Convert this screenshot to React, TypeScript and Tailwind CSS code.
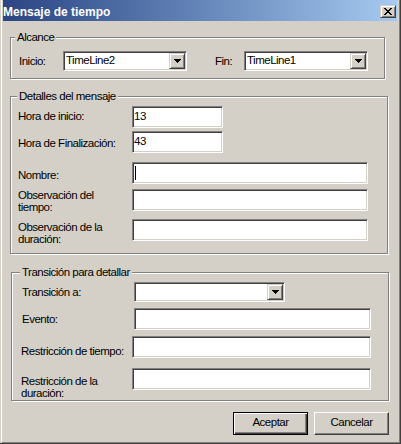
import type { ReactNode } from "react";

const sunken =
  "border border-t-[#808080] border-l-[#808080] border-r-white border-b-white shadow-[inset_1px_1px_0_#404040,inset_-1px_-1px_0_#d4d0c8] bg-white";
const raised =
  "border border-t-[#d4d0c8] border-l-[#d4d0c8] border-r-[#404040] border-b-[#404040] shadow-[inset_1px_1px_0_#fff,inset_-1px_-1px_0_#808080] bg-[#d4d0c8]";

function Arrow() {
  return (
    <svg width="7" height="4" viewBox="0 0 7 4" shapeRendering="crispEdges">
      <rect x="0" y="0" width="7" height="1" fill="#000" />
      <rect x="1" y="1" width="5" height="1" fill="#000" />
      <rect x="2" y="2" width="3" height="1" fill="#000" />
      <rect x="3" y="3" width="1" height="1" fill="#000" />
    </svg>
  );
}

function CloseX() {
  const px = [
    [0, 0], [1, 0], [6, 0], [7, 0],
    [1, 1], [2, 1], [5, 1], [6, 1],
    [2, 2], [3, 2], [4, 2], [5, 2],
    [3, 3], [4, 3],
    [2, 4], [3, 4], [4, 4], [5, 4],
    [1, 5], [2, 5], [5, 5], [6, 5],
    [0, 6], [1, 6], [6, 6], [7, 6],
  ];
  return (
    <svg width="8" height="7" viewBox="0 0 8 7" shapeRendering="crispEdges">
      {px.map(([x, y]) => (
        <rect key={`${x}-${y}`} x={x} y={y} width="1" height="1" fill="#000" />
      ))}
    </svg>
  );
}

function Select({ className, value }: { className: string; value?: string }) {
  return (
    <div className={`${sunken} ${className} flex h-[20px] p-[1px]`}>
      <span className="flex-1 pl-[1px] pt-[1px]">{value}</span>
      <div className={`${raised} flex h-[16px] w-[16px] items-center justify-center`}>
        <Arrow />
      </div>
    </div>
  );
}

function Field({ className, children }: { className: string; children?: ReactNode }) {
  return <div className={`${sunken} ${className} h-[22px] pl-[1px] pt-[3px]`}>{children}</div>;
}

function Group({
  title,
  titleClass,
  className,
  children,
}: {
  title: string;
  titleClass: string;
  className: string;
  children: ReactNode;
}) {
  return (
    <div className={`relative border border-[#808080] shadow-[1px_1px_0_#fff,inset_1px_1px_0_#fff] ${className}`}>
      <span className={`absolute top-[-7px] bg-[#d4d0c8] px-[2px] ${titleClass}`}>{title}</span>
      {children}
    </div>
  );
}

export default function App() {
  return (
    <div className="h-[444px] w-[401px] border-b border-r border-[#404040] bg-[#d4d0c8] pl-[1px] font-['Liberation_Sans',Arial,sans-serif] text-[11.5px] leading-[12px] tracking-[-0.5px] text-black">
      <div className="flex h-full flex-col border-b border-l border-r border-b-[#808080] border-l-white border-r-[#808080] pb-[1px] pl-[1px] pr-[2px]">
        {/* caption */}
        <div className="flex h-[21px] shrink-0 items-start bg-linear-to-r from-[#2b4583] to-[#a6caf0]">
          <span className="pt-[6px] text-[12px] font-bold leading-[12px] tracking-normal text-white">
            Mensaje de tiempo
          </span>
          <div className={`${raised} ml-auto mr-[1px] mt-[5px] flex h-[13px] w-[16px] items-center justify-center`}>
            <CloseX />
          </div>
        </div>

        <Group title="Alcance" titleClass="left-[4px]" className="ml-[7px] mt-[16px] h-[42px] w-[375px] pl-[8px] pt-[13px]">
          <div className="flex items-start">
            <span className="mt-[4px] w-[44px]">Inicio:</span>
            <Select className="w-[124px]" value="TimeLine2" />
            <span className="ml-[28px] mt-[4px] w-[29px]">Fin:</span>
            <Select className="w-[124px]" value="TimeLine1" />
          </div>
        </Group>

        <Group
          title="Detalles del mensaje"
          titleClass="left-[6px]"
          className="ml-[7px] mt-[17px] h-[158px] w-[378px] pl-[7px] pt-[9px]"
        >
          <div className="flex h-[22px] items-start">
            <span className="mt-[4px] w-[114px]">Hora de inicio:</span>
            <Field className="w-[91px]">13</Field>
          </div>
          <div className="mt-[3px] flex h-[22px] items-start">
            <span className="mt-[6px] w-[114px]">Hora de Finalización:</span>
            <Field className="w-[91px]">43</Field>
          </div>
          <div className="mt-[9px] flex h-[22px] items-start">
            <span className="mt-[7px] w-[114px]">Nombre:</span>
            <Field className="w-[236px]">
              <div className="ml-[1px] mt-[0px] h-[14px] w-[1px] bg-black" />
            </Field>
          </div>
          <div className="mt-[5px] flex h-[22px] items-start">
            <span className="w-[114px]">
              Observación del
              <br />
              tiempo:
            </span>
            <Field className="w-[236px]" />
          </div>
          <div className="mt-[8px] flex h-[22px] items-start">
            <span className="mt-[2px] w-[114px]">
              Observación de la
              <br />
              duración:
            </span>
            <Field className="w-[236px]" />
          </div>
        </Group>

        <Group
          title="Transición para detallar"
          titleClass="left-[8px]"
          className="ml-[8px] mt-[18px] h-[129px] w-[378px] pl-[10px] pt-[9px]"
        >
          <div className="flex h-[20px] items-start">
            <span className="mt-[4px] w-[112px]">Transición a:</span>
            <Select className="w-[151px]" />
          </div>
          <div className="mt-[6px] flex h-[22px] items-start">
            <span className="mt-[5px] w-[112px]">Evento:</span>
            <Field className="w-[237px]" />
          </div>
          <div className="mt-[6px] flex h-[22px] items-start">
            <span className="ml-[-1px] mt-[9px] w-[111px]">Restricción de tiempo:</span>
            <Field className="w-[239px]" />
          </div>
          <div className="mt-[10px] flex h-[22px] items-start">
            <span className="ml-[-1px] mt-[7px] w-[111px]">
              Restricción de la
              <br />
              duración:
            </span>
            <Field className="w-[239px]" />
          </div>
        </Group>

        <div className="mt-[11px] flex justify-end gap-[6px] pr-[8px]">
          <div className="h-[23px] w-[75px] border border-black bg-[#d4d0c8] pt-[3px] text-center shadow-[inset_1px_1px_0_#fff,inset_-1px_-1px_0_#404040,inset_-2px_-2px_0_#808080]">
            Aceptar
          </div>
          <div className="h-[23px] w-[75px] border border-b-[#404040] border-l-white border-r-[#404040] border-t-white bg-[#d4d0c8] pt-[3px] text-center shadow-[inset_-1px_-1px_0_#808080]">
            Cancelar
          </div>
        </div>
      </div>
    </div>
  );
}
